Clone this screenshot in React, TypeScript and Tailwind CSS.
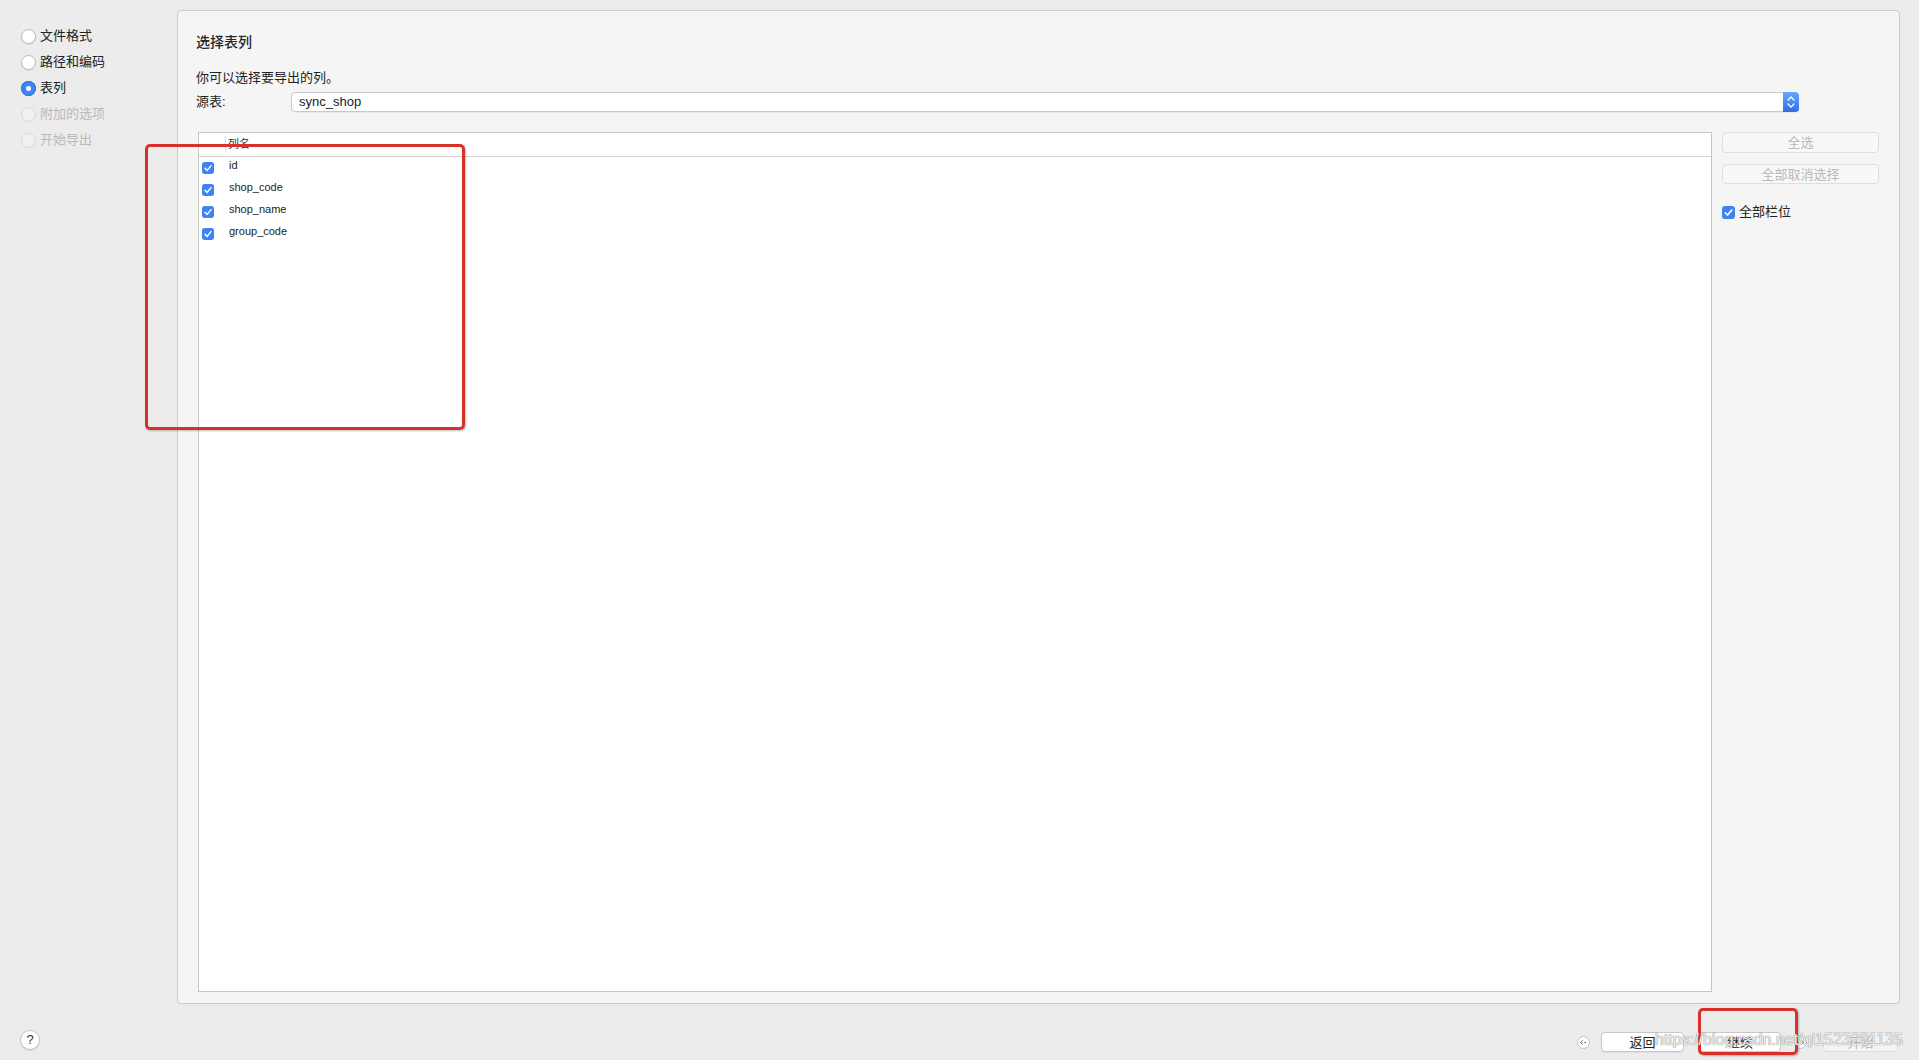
import React from "react";

const FONT = "font-['Liberation_Sans','Noto_Sans_CJK_SC',sans-serif]";

function Radio({ label, state }: { label: string; state: "on" | "off" | "disabled" }) {
  return (
    <div className="flex h-[26px] items-center gap-[4px]">
      {state === "on" ? (
        <span className="flex h-[15px] w-[15px] items-center justify-center rounded-full bg-[#3f86f4] shadow-[inset_0_0_0_1px_#3272dc]">
          <span className="h-[5px] w-[5px] rounded-full bg-white" />
        </span>
      ) : state === "off" ? (
        <span className="h-[15px] w-[15px] rounded-full border border-[#b8b8b8] bg-white shadow-[0_1px_1px_rgba(0,0,0,0.08)]" />
      ) : (
        <span className="h-[15px] w-[15px] rounded-full border border-[#d8d8d8] bg-[#f1f1f1]" />
      )}
      <span className={`text-[13px] leading-[18px] ${state === "disabled" ? "text-[#b9b9b9]" : "text-[#222]"}`}>{label}</span>
    </div>
  );
}

function Check({ size = 13 }: { size?: number }) {
  return (
    <svg width={size} height={size} viewBox="0 0 13 13" className="shrink-0">
      <rect x="0" y="0" width="13" height="13" rx="3" fill="#3d83f5" />
      <path d="M3.3 6.8 L5.6 9.1 L9.8 3.9" fill="none" stroke="#fff" strokeWidth="1.6" strokeLinecap="round" strokeLinejoin="round" />
    </svg>
  );
}

function Stepper() {
  return (
    <div className="flex h-full w-[16px] shrink-0 flex-col items-center justify-center gap-[2px] rounded-r-[4px] bg-gradient-to-b from-[#6aa8fa] to-[#2d6de6]">
      <svg width="8" height="5" viewBox="0 0 8 5">
        <path d="M1 4 L4 1 L7 4" fill="none" stroke="#fff" strokeWidth="1.3" strokeLinecap="round" strokeLinejoin="round" />
      </svg>
      <svg width="8" height="5" viewBox="0 0 8 5">
        <path d="M1 1 L4 4 L7 1" fill="none" stroke="#fff" strokeWidth="1.3" strokeLinecap="round" strokeLinejoin="round" />
      </svg>
    </div>
  );
}

function NavDot({ dir }: { dir: "left" | "right" }) {
  return (
    <svg width="13" height="13" viewBox="0 0 13 13" className="shrink-0">
      <circle cx="6.5" cy="6.5" r="6" fill="#fff" stroke="#c2c2c2" />
      {dir === "left" ? (
        <>
          <path d="M5.6 4.6 L3.6 6.5 L5.6 8.4" fill="none" stroke="#555" strokeWidth="1" />
          <circle cx="8.2" cy="6.5" r="0.8" fill="#555" />
        </>
      ) : (
        <>
          <path d="M7.4 4.6 L9.4 6.5 L7.4 8.4" fill="none" stroke="#555" strokeWidth="1" />
          <circle cx="4.8" cy="6.5" r="0.8" fill="#555" />
        </>
      )}
    </svg>
  );
}

const columns = ["id", "shop_code", "shop_name", "group_code"];

export default function App() {
  return (
    <div className={`relative h-[1060px] w-[1919px] overflow-hidden bg-[#ececec] text-[#222] ${FONT}`}>
      <div className="flex h-[1004px]">
        {/* wizard steps */}
        <div className="flex w-[177px] shrink-0 flex-col pl-[21px] pt-[23px]">
          <Radio label="文件格式" state="off" />
          <Radio label="路径和编码" state="off" />
          <Radio label="表列" state="on" />
          <Radio label="附加的选项" state="disabled" />
          <Radio label="开始导出" state="disabled" />
        </div>

        {/* main panel */}
        <div className="mt-[10px] flex h-[994px] w-[1723px] flex-col rounded-[4px] border border-[#cacaca] bg-[#f5f5f5] pl-[18px] pt-[21px]">
          <div className="text-[14px] font-medium leading-[20px] text-[#262626]">选择表列</div>
          <div className="mt-[17px] text-[13px] leading-[18px]">你可以选择要导出的列。</div>

          <div className="mt-[5px] flex h-[20px] items-center">
            <span className="w-[95px] text-[13px]">源表:</span>
            <div className="flex h-[20px] w-[1508px] items-stretch rounded-[4px] border border-[#c9c9c9] bg-white shadow-[0_1px_1px_rgba(0,0,0,0.05)]">
              <span className="flex-1 pl-[7px] text-[13px] leading-[18px]">sync_shop</span>
              <div className="-my-px -mr-px">
                <Stepper />
              </div>
            </div>
          </div>

          <div className="ml-[2px] mt-[20px] flex gap-[10px]">
            {/* column list */}
            <div className="flex h-[860px] w-[1514px] flex-col border border-[#c6c6c6] bg-white">
              <div className="flex h-[24px] items-center border-b border-[#d6d6d6]">
                <div className="w-[27px] self-stretch py-[3px]">
                  <div className="ml-auto h-full w-px bg-[#e2e2e2]" />
                </div>
                <span className="pl-[2px] text-[11px] text-[#333]">列名</span>
              </div>
              {columns.map((c) => (
                <div key={c} className="flex h-[22px] items-start">
                  <div className="w-[30px] pl-[3px] pt-[5px]">
                    <Check size={12} />
                  </div>
                  <span className="text-[11px] leading-[16px] text-[#222]">{c}</span>
                </div>
              ))}
            </div>

            {/* side buttons */}
            <div className="flex w-[157px] flex-col">
              <button className="h-[21px] rounded-[4px] border border-[#dedede] bg-[#f8f8f8] text-[13px] text-[#b9b9b9]">全选</button>
              <button className="mt-[11px] h-[20px] rounded-[4px] border border-[#dedede] bg-[#f8f8f8] text-[13px] text-[#b9b9b9]">全部取消选择</button>
              <div className="mt-[21px] flex items-center gap-[4px]">
                <Check />
                <span className="text-[13px] leading-[14px]">全部栏位</span>
              </div>
            </div>
          </div>
        </div>
      </div>

      {/* bottom bar */}
      <div className="flex h-[56px] items-start">
        <div className="ml-[20px] mt-[26px] flex h-[20px] w-[20px] items-center justify-center rounded-full border border-[#c4c4c4] bg-white text-[13px] text-[#333] shadow-[0_1px_1px_rgba(0,0,0,0.1)]">
          ?
        </div>
        <div className="ml-auto mr-[21px] mt-[28px] flex h-[20px] items-center">
          <NavDot dir="left" />
          <button className="ml-[11px] h-[20px] w-[83px] rounded-[4px] border border-[#c8c8c8] bg-white text-[13px] shadow-[0_1px_1px_rgba(0,0,0,0.06)]">返回</button>
          <button className="ml-[15px] h-[20px] w-[82px] rounded-[4px] border border-[#c8c8c8] bg-white text-[13px] shadow-[0_1px_1px_rgba(0,0,0,0.06)]">继续</button>
          <span className="ml-[13px]">
            <NavDot dir="right" />
          </span>
          <button className="ml-[16px] h-[20px] w-[75px] rounded-[4px] border border-[#dcdcdc] bg-[#f4f4f4] text-[13px] text-[#b8b8b8]">开始</button>
        </div>
      </div>

      {/* annotations over the screenshot */}
      <div className="pointer-events-none absolute left-[145px] top-[144px] h-[286px] w-[320px] rounded-[5px] border-[3px] border-[#d9302a] shadow-[1px_1px_2px_rgba(0,0,0,0.25)]" />
      <div className="pointer-events-none absolute left-[1698px] top-[1008px] h-[47px] w-[100px] rounded-[5px] border-[3px] border-[#d9302a] shadow-[1px_1px_2px_rgba(0,0,0,0.25)]" />
      <div className="pointer-events-none absolute left-[1655px] top-[1030px] whitespace-nowrap text-[16px] leading-[20px] text-[#ededed] [text-shadow:0_0_1px_#8a8a8a,0_0_1px_#8a8a8a]">
        https://blog.csdn.net/qi1523281135
      </div>
    </div>
  );
}
